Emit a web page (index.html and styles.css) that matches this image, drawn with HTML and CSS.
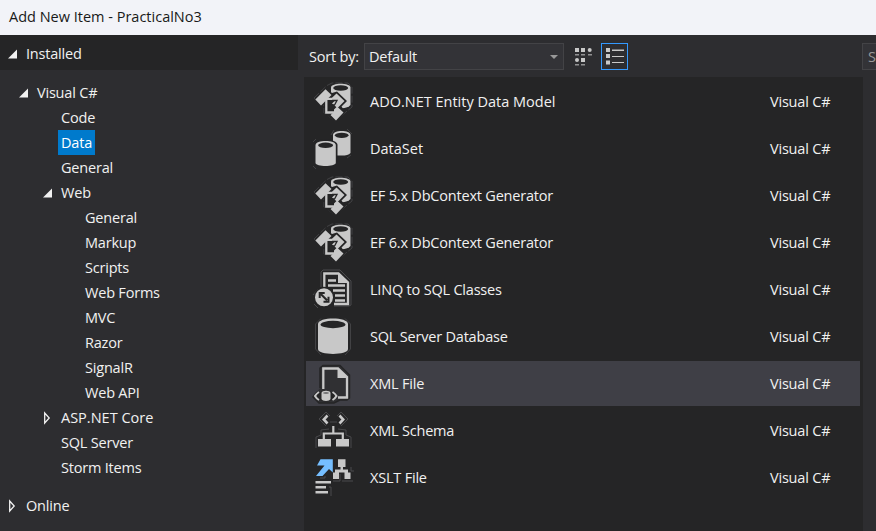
FILE: index.html
```html
<!DOCTYPE html>
<html lang="en">
<head>
<meta charset="utf-8">
<title>Add New Item - PracticalNo3</title>
<link rel="stylesheet" href="styles.css">
</head>
<body>
<svg class="defs" width="0" height="0">
  <defs>
    <symbol id="open" viewBox="0 0 10 10"><path d="M10 .5V9.500H1Z" fill="#f1f1f1"/></symbol>
    <symbol id="closed" viewBox="0 0 10 14"><path d="M2.700 2V12L7.200 7Z" fill="none" stroke="#f1f1f1" stroke-width="1.300"/></symbol>
    <symbol id="entity" viewBox="0 0 60 45">
      <path d="M8 19L21 6.500L26 4H42L46 8V28L29 42L18 34V27Z" fill="none" stroke="#424244" stroke-dasharray="7 2"/>
      <path d="M25 8.500C25 3.500 44.500 3.500 44.500 8.500V26C43 28.500 38 29.500 33 29L25 20Z" fill="#c8c8c8"/>
      <ellipse cx="34.700" cy="9" rx="7.500" ry="2.800" fill="#252526"/>
      <path d="M8 20.500L19.500 8.500L26 14L31 12.500L41 22L35.500 27.500L39.500 33L30 43L18.500 35V25.500L15 28Z" fill="#252526"/>
      <path d="M9.300 20.500L19.500 10.300L25.500 16L15 26.500Z" fill="#c8c8c8"/>
      <path d="M18 19.800H32M20.300 20V33.500H30" fill="none" stroke="#c8c8c8" stroke-width="2.300"/>
      <path d="M30.500 14.500L38.500 22L31.500 29L26 24.500L29 21.500L26 18.800Z" fill="#c8c8c8"/>
      <path d="M31 27.500L37.500 33.500L30 41.500L24.500 36L28 33V30.500Z" fill="#c8c8c8"/>
      <path d="M26 21.500H31L28.500 26H23V31H28" fill="none" stroke="#252526" stroke-width="1.300"/>
    </symbol>
    <symbol id="dataset" viewBox="0 0 60 45">
      <path d="M25 9L28 4M41 3L46 8M7 40L10 43M45 29L41 32M7 16L10 13" stroke="#424244"/>
      <path d="M27 9C27 3.700 44.500 3.700 44.500 9V27C42 30 36 30 27 29Z" fill="#c8c8c8"/><ellipse cx="35.700" cy="9.300" rx="6.800" ry="2.600" fill="#252526"/>
      <path d="M8 19C8 11.500 31.500 11.500 31.500 19V38H8Z" fill="#252526"/>
      <path d="M9.500 19C9.500 13.500 29.800 13.500 29.800 19V37C29 41 10 41 9.500 37Z" fill="#c8c8c8"/><ellipse cx="19.600" cy="19.300" rx="7.500" ry="2.700" fill="#252526"/>
    </symbol>
    <symbol id="linq" viewBox="0 0 60 45">
      <path d="M15 20V5L17 3H34L45 14V38L43 39H28M7 28L12 22M8 37L12 41" fill="none" stroke="#4a4a4c"/>
      <path d="M18.300 20V6.500H32.500L42 15.500V37H28" fill="none" stroke="#c8c8c8" stroke-width="2.300"/>
      <path d="M32 6V16H42Z" fill="#c8c8c8"/>
      <path d="M22 13.500H30M22 18.500H39M27 23.500H39M29 28.500H39M29 33.500H39" stroke="#c8c8c8" stroke-width="2.500"/>
      <circle cx="18" cy="30.300" r="10.500" fill="#252526"/><circle cx="18" cy="30.300" r="9" fill="#c8c8c8"/>
      <path d="M15 27.300L21 33.300M13.700 31V26H18.700M22.500 29.700V34.700H17.500" fill="none" stroke="#252526" stroke-width="2"/>
    </symbol>
    <symbol id="sql" viewBox="0 0 60 45">
      <path d="M9.500 35V10L15 4.500M39 4.500L44.500 10V35L39 41M9.500 35L15 41" fill="none" stroke="#424244"/>
      <path d="M12 10C12 2.700 42 2.700 42 10V35C42 41.500 12 41.500 12 35Z" fill="#c8c8c8"/><ellipse cx="27" cy="10.500" rx="12.500" ry="3.700" fill="#252526"/>
    </symbol>
    <symbol id="xml" viewBox="0 0 60 45">
      <path d="M14 27V7L17 4.500H34L43.500 14V37L41 39H34L28 42H13L7 36L11 31" fill="#303033" stroke="#252526" stroke-width="1.500"/>
      <path d="M17.300 28V7.500H32L41 16V36.500H32" fill="none" stroke="#c8c8c8" stroke-width="2.300"/><path d="M31.500 7V17H42Z" fill="#c8c8c8"/>
      <path d="M8 35Q19 25 32 35Q20 46 8 35Z" fill="#252526"/>
      <path d="M13 31Q10.500 32.500 9 35Q10.500 37.500 13 39M26.500 31Q29 32.500 30.500 35Q29 37.500 26.500 39" fill="none" stroke="#c8c8c8" stroke-width="2"/>
      <path d="M15.500 32C15.500 29 24.500 29 24.500 32V38C24 40.500 16 40.500 15.500 38Z" fill="#c8c8c8"/><ellipse cx="20" cy="32" rx="3" ry=".8" fill="#555558"/>
    </symbol>
    <symbol id="xsd" viewBox="0 0 60 45">
      <path d="M13 11L20 4L24 8M31 8L35 4L42 11L35 18M13 11L20 18M24 14H31M23 21L15 22V27L10 29V40M32 21L40 22V27L45 29V40" fill="none" stroke="#48484a"/>
      <path d="M21.500 7.500L17.800 11.500L21.500 15.500M33.500 7.500L37.200 11.500L33.500 15.500" fill="none" stroke="#c8c8c8" stroke-width="2.600"/>
      <path d="M27.300 18V25.500M17.800 31V25.500H36.800V31" fill="none" stroke="#c8c8c8" stroke-width="2.200"/>
      <path d="M12 31H25V38.500H12ZM30 31H43V38.500H30Z" fill="#c8c8c8"/>
    </symbol>
    <symbol id="xslt" viewBox="0 0 60 45">
      <path d="M45 12V16H48M27 26H34V19M36 26H47M19 21V23H14M23 32H25V41" fill="none" stroke="#4a4a4c"/>
      <path d="M14.500 4.300H26.800V17.500L23 14L16.500 21H10L18.500 10.500H11Z" fill="#75beff"/>
      <path d="M32 4.300H39.500V12H37V14.500H42V17.500H44.500V24H38.500V17.500H33V24H27V17.500H29V14.500H34.500V12H32Z" fill="#c8c8c8"/>
      <path d="M9.500 27.300H25M9.500 32.300H20M9.500 37.300H22" stroke="#c8c8c8" stroke-width="2.600"/>
    </symbol>
  </defs>
</svg>
<div class="dialog">
  <header class="titlebar">Add New Item - PracticalNo3</header>
  <div class="body">
    <nav class="side">
      <div class="node root installed"><svg class="mark"><use href="#open"/></svg>Installed</div>
      <div class="tree">
        <div class="node l1"><svg class="mark"><use href="#open"/></svg>Visual C#</div>
        <div class="node l2">Code</div>
        <div class="node l2"><span class="selected">Data</span></div>
        <div class="node l2">General</div>
        <div class="node l2"><svg class="mark"><use href="#open"/></svg>Web</div>
        <div class="node l3">General</div>
        <div class="node l3">Markup</div>
        <div class="node l3">Scripts</div>
        <div class="node l3">Web Forms</div>
        <div class="node l3">MVC</div>
        <div class="node l3">Razor</div>
        <div class="node l3">SignalR</div>
        <div class="node l3">Web API</div>
        <div class="node l2 wide"><svg class="mark shut"><use href="#closed"/></svg>ASP.NET Core</div>
        <div class="node l2">SQL Server</div>
        <div class="node l2">Storm Items</div>
      </div>
      <div class="node root online"><svg class="mark shut"><use href="#closed"/></svg>Online</div>
    </nav>
    <main class="main">
      <div class="toolbar">
        <span class="sort-label">Sort by:</span>
        <div class="combo"><span>Default</span><svg width="8" height="4"><path d="M0 0H8L4 4Z" fill="#999"/></svg></div>
        <svg class="grid-button" width="18" height="19" fill="#c8c8c8"><path d="M0 1H4V5H0ZM6 1H10V5H6ZM6 11H10V15H6Z"/><circle cx="14.700" cy="3" r="2"/><circle cx="2" cy="13" r="2"/><path d="M0 7H4V8.500H0ZM6 7H10V8.500H6ZM13 7H17V8.500H13ZM0 17H4V18.500H0ZM6 17H10V18.500H6Z" opacity=".65"/></svg>
        <div class="list-button"><svg width="18" height="17" fill="#c8c8c8"><path d="M0 0H4V4H0ZM0 6H4V10H0ZM0 12.500H4V16.500H0ZM6 1.500H18V3H6ZM6 8H18V9H6ZM6 14H18V15H6Z"/></svg></div>
        <div class="search">Search</div>
      </div>
      <div class="list">
        <div class="row"><svg class="icon"><use href="#entity"/></svg><span class="name wide">ADO.NET Entity Data Model</span><span>Visual C#</span></div>
        <div class="row"><svg class="icon"><use href="#dataset"/></svg><span class="name wide">DataSet</span><span>Visual C#</span></div>
        <div class="row"><svg class="icon"><use href="#entity"/></svg><span class="name">EF 5.x DbContext Generator</span><span>Visual C#</span></div>
        <div class="row"><svg class="icon"><use href="#entity"/></svg><span class="name">EF 6.x DbContext Generator</span><span>Visual C#</span></div>
        <div class="row"><svg class="icon"><use href="#linq"/></svg><span class="name">LINQ to SQL Classes</span><span>Visual C#</span></div>
        <div class="row"><svg class="icon"><use href="#sql"/></svg><span class="name">SQL Server Database</span><span>Visual C#</span></div>
        <div class="row active"><svg class="icon"><use href="#xml"/></svg><span class="name">XML File</span><span>Visual C#</span></div>
        <div class="row"><svg class="icon"><use href="#xsd"/></svg><span class="name">XML Schema</span><span>Visual C#</span></div>
        <div class="row"><svg class="icon"><use href="#xslt"/></svg><span class="name">XSLT File</span><span>Visual C#</span></div>
      </div>
    </main>
  </div>
</div>
</body>
</html>
```
FILE: styles.css
```css
* { box-sizing: border-box; }
body {
  margin: 0;
  overflow: hidden;
  font: 14.5px/20px "Open Sans", "Noto Sans", sans-serif;
  letter-spacing: -0.2px;
  color: #f1f1f1;
}
.defs { display: none; }
.dialog { display: flex; flex-direction: column; width: 876px; height: 531px; background: #2d2d30; overflow: hidden; }
.titlebar { flex: none; height: 35px; padding: 7px 9px; background: #f2f3f8; color: #191919; letter-spacing: 0; }
.body { flex: 1; display: flex; min-height: 0; }
.side { flex: none; width: 298px; }
.node { display: flex; align-items: center; height: 25px; white-space: nowrap; }
.mark { flex: none; width: 10px; height: 10px; margin-right: 9px; }
.shut { height: 14px; }
.root { padding-left: 7px; }
.installed { height: 35px; padding-top: 2px; background: #252526; }
.tree { padding-top: 10px; }
.l1 { padding-left: 18px; }
.l2 { padding-left: 61px; }
.l2 .mark { margin-left: -19px; }
.l3 { padding-left: 85px; }
.selected { height: 25px; margin-left: -3px; padding: 3px 3px 2px; background: #007acc; color: #fff; }
.online { margin-top: 13px; }
.main { flex: 1; min-width: 0; display: flex; flex-direction: column; padding-left: 6px; }
.toolbar { flex: none; height: 42px; display: flex; align-items: center; padding-top: 1px; }
.toolbar > * { flex: none; }
.sort-label { width: 60px; padding-left: 5px; white-space: nowrap; }
.combo { display: flex; align-items: center; justify-content: space-between; width: 200px; height: 27px; padding: 0 5px 0 4px; border: 1px solid #434346; background: #333337; }
.grid-button { margin-left: 11px; }
.list-button { display: flex; align-items: center; justify-content: center; width: 27px; height: 27px; margin-left: 8px; border: 1px solid #3399ff; }
.search { width: 200px; height: 27px; margin-left: 234px; padding: 3px 5px; border: 1px solid #434346; background: #333337; color: #999; }
.list { flex: 1; width: 559px; padding: 2px 3px 0 2px; background: #252526; }
.row { display: flex; align-items: center; height: 45px; margin-bottom: 2px; white-space: nowrap; }
.active { background: #3f3f46; }
.icon { flex: none; width: 60px; height: 45px; margin-right: 4px; }
.name { width: 400px; }
.wide { letter-spacing: 0; }
```
